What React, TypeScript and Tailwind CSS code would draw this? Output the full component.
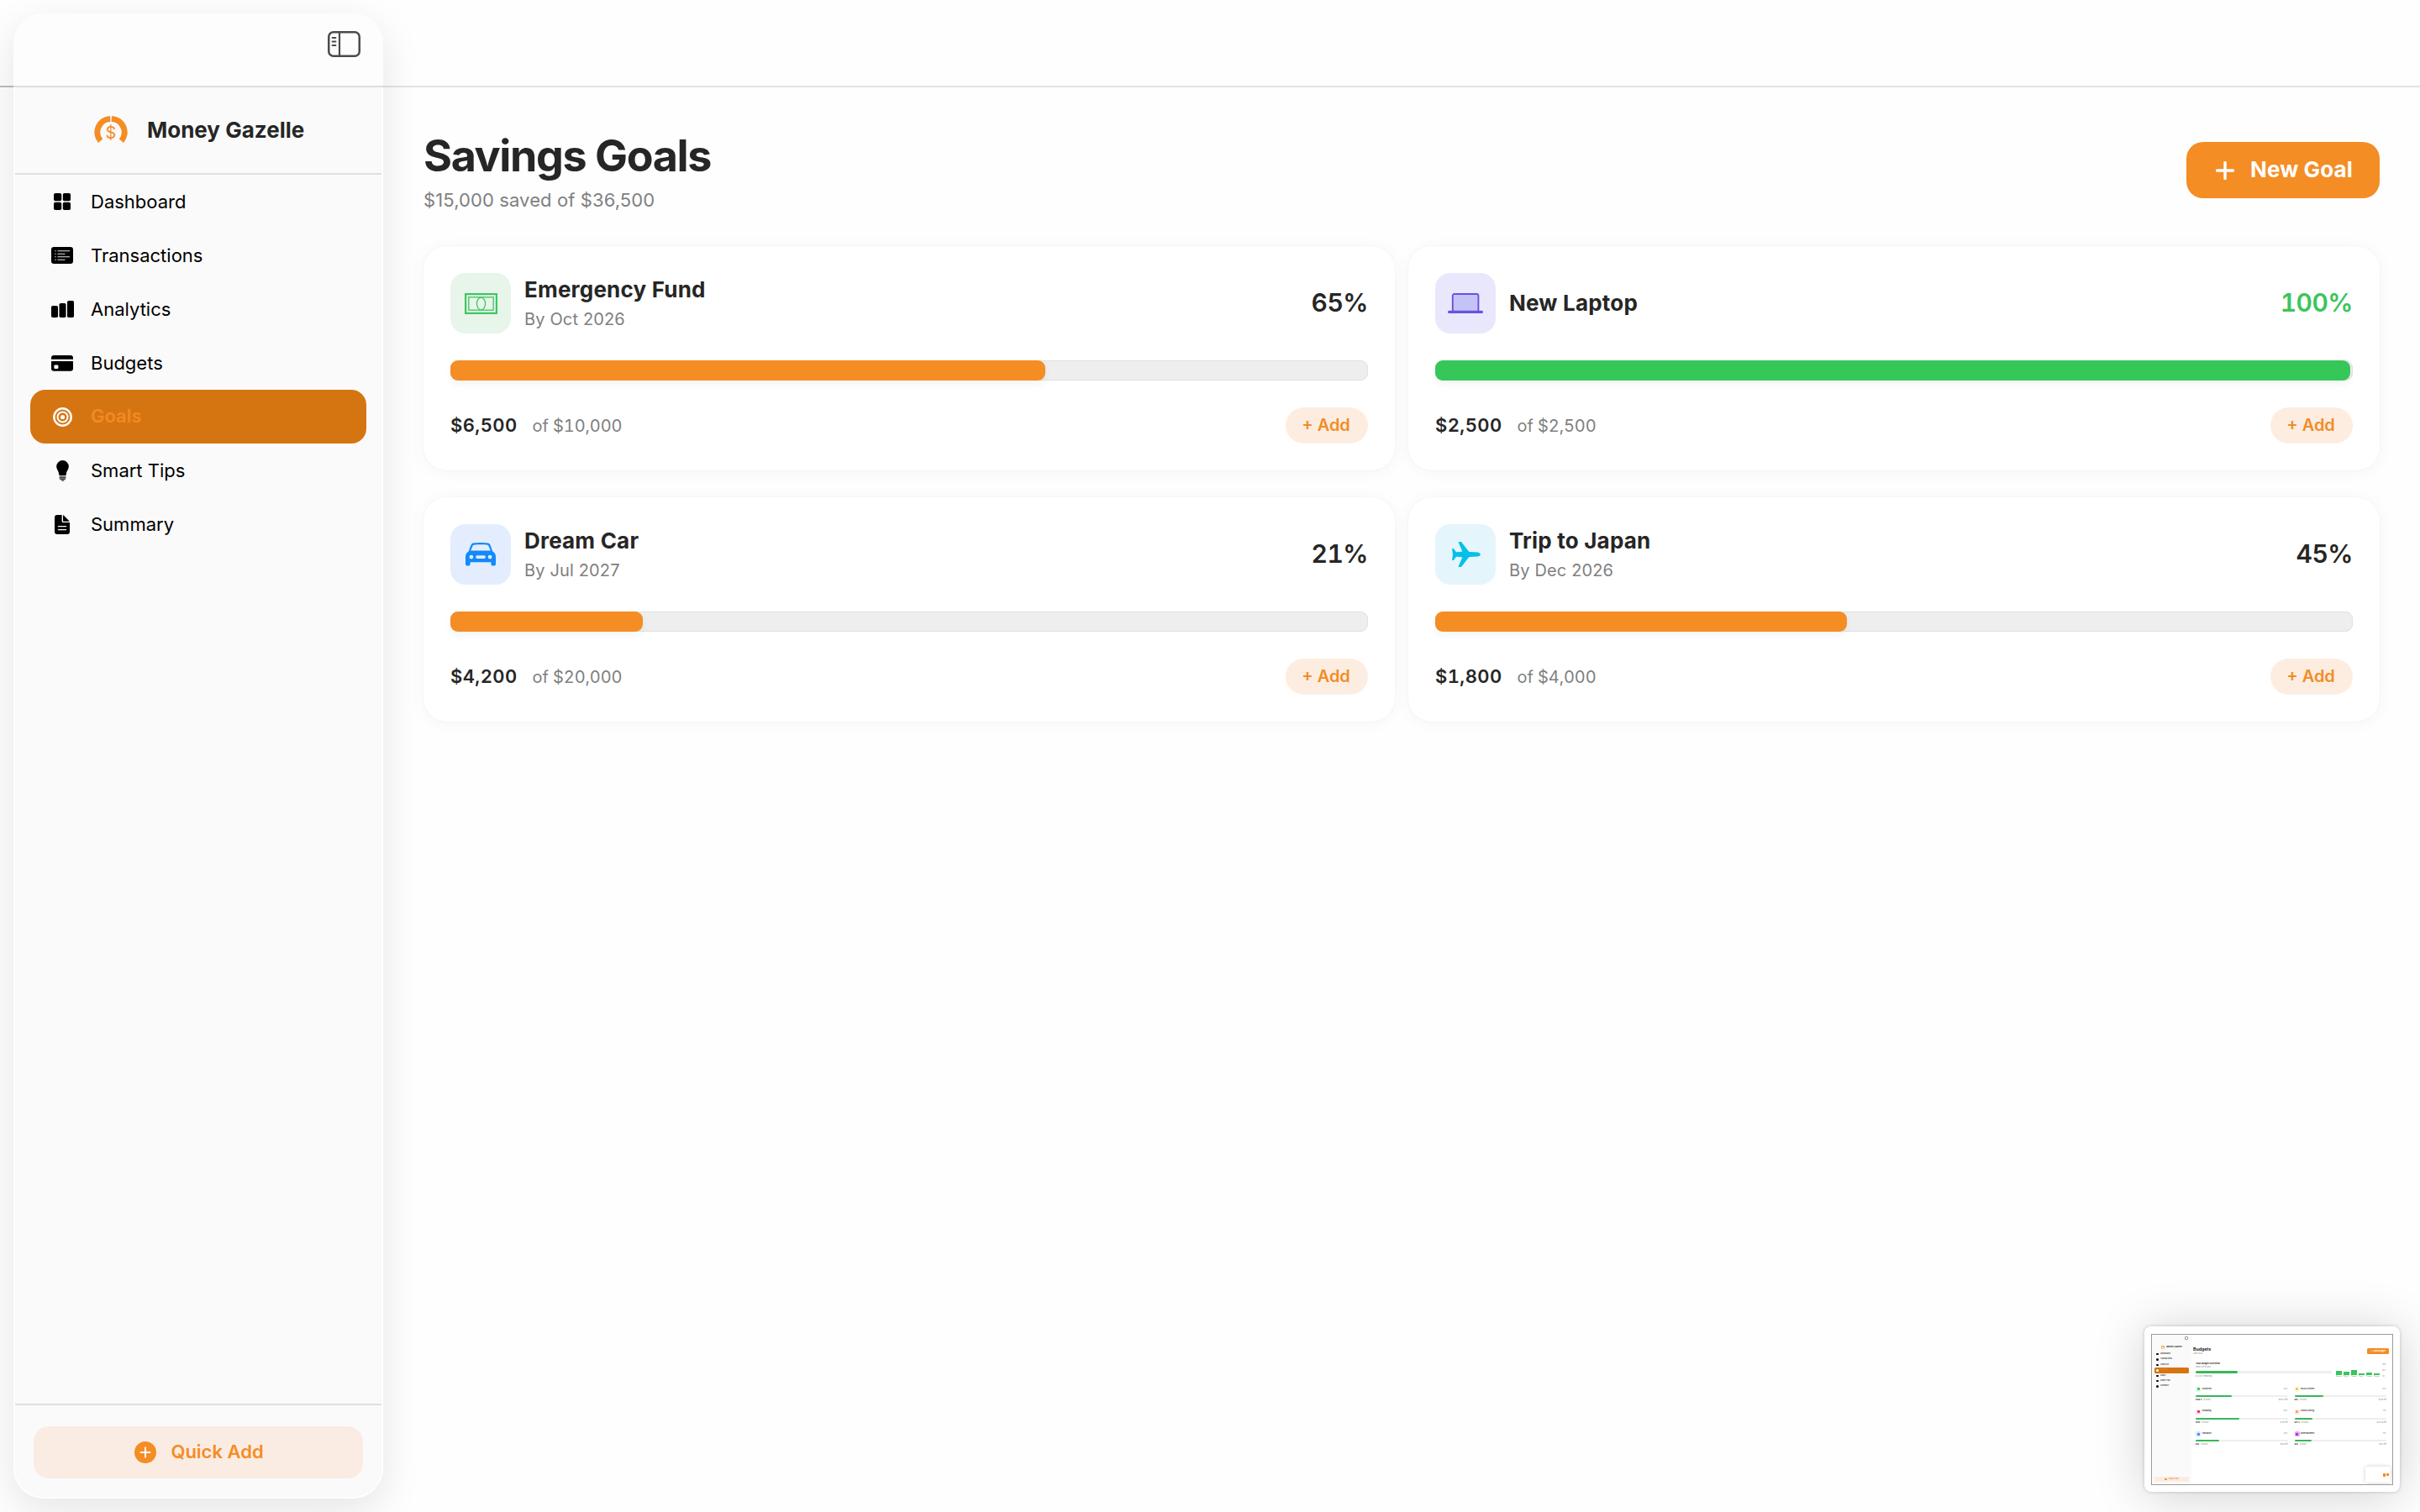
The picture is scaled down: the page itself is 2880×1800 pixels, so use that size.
import type { ReactNode } from "react";
import clsx from "clsx";

type IconProps = { className?: string };

function SidebarToggleIcon() {
  return (
    <svg width="39" height="31" viewBox="0 0 39 31" fill="none" stroke="#4b4b4b">
      <rect x="1.25" y="1.25" width="36.5" height="28.5" rx="5.5" strokeWidth="2.5" />
      <path d="M14 1.5v28" strokeWidth="2.2" />
      <path d="M5.5 8h4M5.5 12.5h4M5.5 17h4" strokeWidth="1.8" strokeLinecap="round" />
    </svg>
  );
}

function LogoIcon() {
  return (
    <svg width="40" height="36" viewBox="0 0 40 36">
      <path d="M19.2 4.5A16 16 0 0 0 7.6 30.8" fill="none" stroke="#f48d24" strokeWidth="7" />
      <path d="M20.8 4.5A16 16 0 0 1 32.4 30.8" fill="none" stroke="#f48d24" strokeWidth="7" />
      <text
        x="20"
        y="27.5"
        textAnchor="middle"
        fontSize="20"
        fontFamily="Inter, sans-serif"
        fill="#f48d24"
      >
        $
      </text>
    </svg>
  );
}

function DashboardIcon({ className }: IconProps) {
  return (
    <svg className={className} width="20" height="20" viewBox="0 0 20 20" fill="currentColor">
      <rect width="9.2" height="9.2" rx="1.8" />
      <rect x="10.8" width="9.2" height="9.2" rx="1.8" />
      <rect y="10.8" width="9.2" height="9.2" rx="1.8" />
      <rect x="10.8" y="10.8" width="9.2" height="9.2" rx="1.8" />
    </svg>
  );
}

function TransactionsIcon({ className }: IconProps) {
  return (
    <svg className={className} width="26" height="20" viewBox="0 0 26 20">
      <rect width="26" height="20" rx="3.2" fill="currentColor" />
      <path
        d="M7.5 4.7H22M7.5 8.2h9M7.5 11.7H22M7.5 15.2h9M4.3 4.7h1.4M4.3 8.2h1.4M4.3 11.7h1.4M4.3 15.2h1.4"
        stroke="#e4e4e4"
        strokeWidth="1.1"
      />
    </svg>
  );
}

function AnalyticsIcon({ className }: IconProps) {
  return (
    <svg className={className} width="27" height="20" viewBox="0 0 27 20" fill="currentColor">
      <rect y="6" width="8" height="14" rx="1.8" />
      <rect x="9.5" y="3" width="8" height="17" rx="1.8" />
      <rect x="19" width="8" height="20" rx="1.8" />
    </svg>
  );
}

function BudgetsIcon({ className }: IconProps) {
  return (
    <svg className={className} width="26" height="19" viewBox="0 0 26 19" fill="currentColor">
      <path d="M3.2 0h19.6A3.2 3.2 0 0 1 26 3.2v1.6H0V3.2A3.2 3.2 0 0 1 3.2 0Z" />
      <path
        fillRule="evenodd"
        d="M0 7h26v8.6a3.2 3.2 0 0 1-3.2 3.2H3.2A3.2 3.2 0 0 1 0 15.6V7Zm4.2 4.4a.8.8 0 0 0-.8.8v2.9c0 .4.4.8.8.8h3.4c.4 0 .8-.4.8-.8v-2.9a.8.8 0 0 0-.8-.8H4.2Z"
      />
    </svg>
  );
}

function GoalsIcon({ className }: IconProps) {
  return (
    <svg className={className} width="23" height="23" viewBox="0 0 23 23" fill="none" stroke="currentColor">
      <circle cx="11.5" cy="11.5" r="10.2" strokeWidth="2.4" />
      <circle cx="11.5" cy="11.5" r="6" strokeWidth="2" />
      <circle cx="11.5" cy="11.5" r="2.6" fill="currentColor" stroke="none" />
    </svg>
  );
}

function TipsIcon({ className }: IconProps) {
  return (
    <svg className={className} width="15" height="25" viewBox="0 0 15 25" fill="currentColor">
      <path d="M7.5 0A7.3 7.3 0 0 0 .2 7.3c0 3.8 2.6 5 3 9.4.1.9.6 1.6 1.5 1.6h5.6c.9 0 1.4-.7 1.5-1.6.4-4.4 3-5.6 3-9.4A7.3 7.3 0 0 0 7.5 0Z" />
      <path d="M3.6 19.4h7.8v1.3H3.6zM3.6 21.6h7.8c0 .7-.5 1.2-1.2 1.2H4.8c-.7 0-1.2-.5-1.2-1.2ZM5.2 23.6h4.6c-.4.8-1.3 1.2-2.3 1.2s-1.9-.4-2.3-1.2Z" />
    </svg>
  );
}

function SummaryIcon({ className }: IconProps) {
  return (
    <svg className={className} width="18" height="23" viewBox="0 0 18 23">
      <path
        d="M3 0h5.6v7.2c0 1.1.7 1.8 1.8 1.8H18v11a3 3 0 0 1-3 3H3a3 3 0 0 1-3-3V3a3 3 0 0 1 3-3Z"
        fill="currentColor"
      />
      <path d="M10 .3c.5.1.9.4 1.3.8l5.6 5.6c.4.4.6.7.7 1.1h-6.9c-.5 0-.7-.2-.7-.7V.3Z" fill="currentColor" />
      <path d="M4.4 13.7h9.2M4.4 17.6h9.2" stroke="#f9f9f9" strokeWidth="1.3" strokeLinecap="round" />
    </svg>
  );
}

function CashIcon() {
  return (
    <svg width="39" height="25" viewBox="0 0 39 25" fill="none" stroke="#3fc661">
      <rect x="1.1" y="1.1" width="36.8" height="22.8" strokeWidth="2.2" />
      <rect x="4.8" y="4.8" width="29.4" height="15.4" strokeWidth="1.3" />
      <ellipse cx="19.5" cy="12.5" rx="5.1" ry="7.3" strokeWidth="1.3" />
    </svg>
  );
}

function LaptopIcon() {
  return (
    <svg width="42" height="24" viewBox="0 0 42 24">
      <rect x="5.8" y="1" width="30.6" height="21" rx="2" fill="#c5c3f6" stroke="#6553e0" strokeWidth="1.9" />
      <rect y="20.8" width="42" height="3.2" rx="1.6" fill="#6553e0" />
    </svg>
  );
}

function CarIcon() {
  return (
    <svg width="36" height="28" viewBox="0 0 36 28" fill="#1389fb">
      <path
        fillRule="evenodd"
        d="M9.5 0.6C14 -.1 22 -.1 26.5 .6c1.6.2 2.6 1.2 3.2 2.7l2.6 7.1c2.1 1.1 3.7 3.2 3.7 6.1v8.9c0 1.2-.9 2.1-2.1 2.1h-1.4c-1.2 0-2.1-.9-2.1-2.1v-2.1H5.6v2.1c0 1.2-.9 2.1-2.1 2.1H2.1C.9 27.5 0 26.6 0 25.4v-8.9c0-2.9 1.6-5 3.7-6.1l2.6-7.1C6.9 1.8 7.9.8 9.5.6ZM10 2.7c-.7.1-1.2.5-1.5 1.2L6.2 9.5h23.6l-2.3-5.6c-.3-.7-.8-1.1-1.5-1.2-4-.5-12-.5-16 0ZM6.9 14.7a2.4 2.4 0 1 0 0 4.8 2.4 2.4 0 0 0 0-4.8Zm22.2 0a2.4 2.4 0 1 0 0 4.8 2.4 2.4 0 0 0 0-4.8ZM14 15.2a1.9 1.9 0 1 0 0 3.8h8a1.9 1.9 0 1 0 0-3.8h-8Z"
      />
    </svg>
  );
}

function PlaneIcon() {
  return (
    <svg className="ml-px" width="34" height="30" viewBox="0 0 34 30" fill="#04c0e8">
      <path d="M30.3 12.4c2 .2 3.5 1.3 3.5 2.6s-1.5 2.4-3.5 2.6l-9.3.4c-.6 0-.9.2-1.3.7L11.8 29c-.4.6-.9.9-1.6.9H8.4c-.5 0-.8-.4-.6-.9l4.3-10c.2-.5 0-.8-.6-.8l-5.9-.4c-.4 0-.7.1-1 .5l-2.3 3.1c-.3.4-.6.5-1 .5H.7c-.4 0-.6-.2-.6-.7l.9-6.2L.1 8.8c0-.5.2-.7.6-.7h.6c.4 0 .7.1 1 .5l2.3 3.1c.3.4.6.5 1 .5l5.900-.4c.6 0 .8-.3.6-.8L7.8 1c-.2-.5.1-.9.6-.9h1.800c.7 0 1.200.3 1.600.9l7.900 10.300c.4.5.7.7 1.300.7l9.300.4Z" />
    </svg>
  );
}

const NAV = [
  { label: "Dashboard", Icon: DashboardIcon },
  { label: "Transactions", Icon: TransactionsIcon },
  { label: "Analytics", Icon: AnalyticsIcon },
  { label: "Budgets", Icon: BudgetsIcon },
  { label: "Goals", Icon: GoalsIcon },
  { label: "Smart Tips", Icon: TipsIcon },
  { label: "Summary", Icon: SummaryIcon },
];

function Sidebar() {
  return (
    <aside className="relative m-4 mr-0 flex h-[1768px] w-[440px] shrink-0 flex-col rounded-[36px] bg-[#fafafa] shadow-[0_14px_48px_rgba(0,0,0,0.1),inset_0_0_0_2px_#fefefe]">
      <div className="flex h-[88px] shrink-0 items-start justify-end rounded-t-[36px] border-b-2 border-[#dedede] bg-[#fdfdfd] pt-[21px] pr-[27px]">
        <SidebarToggleIcon />
      </div>
      <div className="mx-0.5 flex h-[104px] shrink-0 items-center border-b-2 border-[#e0e0df] pl-[94px]">
        <LogoIcon />
        <span className="ml-[23px] pb-0.5 text-[26px] font-bold text-[#262626]">Money Gazelle</span>
      </div>
      <nav className="flex flex-1 flex-col px-5">
        {NAV.map(({ label, Icon }) => {
          const active = label === "Goals";
          return (
            <div
              key={label}
              className={clsx(
                "flex h-16 items-center rounded-[18px] pl-[18px] text-[22px]",
                active ? "bg-[#d57512] font-semibold text-[#f28a22]" : "text-black",
              )}
            >
              <span className="flex w-10 justify-center">
                <Icon className={active ? "text-white" : "text-black"} />
              </span>
              <span className={clsx("ml-[14px]", active && "pb-0.5")}>{label}</span>
            </div>
          );
        })}
      </nav>
      <div className="mx-0.5 h-[113px] shrink-0 border-t-2 border-[#dfdfdf] px-[22px] pt-[25px]">
        <button className="flex h-[62px] w-full items-center justify-center rounded-[18px] bg-[#fbece3] pl-0.5 text-[22px] font-semibold text-[#f48d24]">
          <svg width="26" height="26" viewBox="0 0 26 26">
            <circle cx="13" cy="13" r="13" fill="#f48d24" />
            <path d="M13 7.5v11M7.5 13h11" stroke="#fff" strokeWidth="2" strokeLinecap="round" />
          </svg>
          <span className="ml-[17px] pb-px">Quick Add</span>
        </button>
      </div>
    </aside>
  );
}

type Goal = {
  name: string;
  due?: string;
  percent: number;
  saved: string;
  target: string;
  tile: string;
  icon: ReactNode;
};

const GOALS: Goal[] = [
  {
    name: "Emergency Fund",
    due: "By Oct 2026",
    percent: 65,
    saved: "$6,500",
    target: "$10,000",
    tile: "bg-[#e7f5ea]",
    icon: <CashIcon />,
  },
  {
    name: "New Laptop",
    percent: 100,
    saved: "$2,500",
    target: "$2,500",
    tile: "bg-[#e9e7fc]",
    icon: <LaptopIcon />,
  },
  {
    name: "Dream Car",
    due: "By Jul 2027",
    percent: 21,
    saved: "$4,200",
    target: "$20,000",
    tile: "bg-[#e3edfd]",
    icon: <CarIcon />,
  },
  {
    name: "Trip to Japan",
    due: "By Dec 2026",
    percent: 45,
    saved: "$1,800",
    target: "$4,000",
    tile: "bg-[#e5f5fc]",
    icon: <PlaneIcon />,
  },
];

function GoalCard({ goal }: { goal: Goal }) {
  const done = goal.percent >= 100;
  return (
    <div className="h-[267px] rounded-[28px] bg-white p-8 shadow-[0_0_0_1px_rgba(0,0,0,0.02),0_2px_20px_rgba(0,0,0,0.04)]">
      <div className="flex items-center">
        <div className={clsx("flex size-[72px] items-center justify-center rounded-[18px]", goal.tile)}>
          {goal.icon}
        </div>
        <div className={clsx("ml-4", goal.due && "-mt-0.5")}>
          <div className="text-[26px] leading-8 font-bold tracking-[0.2px] text-[#262626]">{goal.name}</div>
          {goal.due && (
            <div className="mt-[7px] text-[20px] leading-6 tracking-[0.15px] text-[#808080]">{goal.due}</div>
          )}
        </div>
        <div
          className={clsx(
            "ml-auto pb-px text-[30px] font-semibold tracking-[-0.5px] tabular-nums",
            done ? "text-[#3cc45d]" : "text-[#262626]",
          )}
        >
          {goal.percent}%
        </div>
      </div>
      <div className="mt-8 h-6 rounded-[9px] bg-[#eeeeee] pr-[3px] shadow-[inset_0_0_0_1px_#e0e0e0]">
        <div
          className={clsx(
            "h-6 rounded-[9px] shadow-[0_4px_10px_rgba(0,0,0,0.05)]",
            done ? "bg-[#36c759]" : "bg-[#f48d24]",
          )}
          style={{ width: `${goal.percent}%` }}
        />
      </div>
      <div className="mt-8 flex h-[43px] items-center">
        <span className="text-[22px] font-semibold tracking-[0.4px] text-[#262626] tabular-nums">{goal.saved}</span>
        <span className="ml-[18px] text-[20px] tracking-[-0.1px] text-[#808080] tabular-nums">of {goal.target}</span>
        <button className="ml-auto h-[43px] w-[98px] rounded-full bg-[#fdede1] pr-0.5 pb-px text-[20px] font-semibold text-[#f28c26]">
          + Add
        </button>
      </div>
    </div>
  );
}

const THUMB_BUDGETS = [
  { name: "Groceries", fill: "w-[43px]", dot: "bg-[#36c759]", tile: "bg-[#e7f5ea]", spent: "$198.5", of: "of $500", left: "$301.5 left", pct: "40%" },
  { name: "Bills & Utilities", fill: "w-[34px]", dot: "bg-[#f5c542]", tile: "bg-[#fdf6e0]", spent: "$95", of: "of $300", left: "$205 left", pct: "32%" },
  { name: "Shopping", fill: "w-[52px]", dot: "bg-[#f0264f]", tile: "bg-[#fde6ea]", spent: "$120", of: "of $250", left: "$130 left", pct: "48%" },
  { name: "Food & Dining", fill: "w-[21px]", dot: "bg-[#f5a06a]", tile: "bg-[#fdeadf]", spent: "$76.4", of: "of $400", left: "$323.6 left", pct: "19%" },
  { name: "Transport", fill: "w-[28px]", dot: "bg-[#3f8cf5]", tile: "bg-[#d5e6fd]", spent: "$52", of: "of $200", left: "$148 left", pct: "26%" },
  { name: "Entertainment", fill: "w-[20px]", dot: "bg-[#b02cd0]", tile: "bg-[#e3a9f0]", spent: "$28", of: "of $150", left: "$122 left", pct: "19%" },
];

const THUMB_BARS = [
  { height: "h-[5px]", label: "Groceri…" },
  { height: "h-[4px]", label: "Bills &…" },
  { height: "h-[6px]", label: "Shopp…" },
  { height: "h-[2px]", label: "Food …" },
  { height: "h-[3px]", label: "Transp…" },
  { height: "h-[2px]", label: "Enterta…" },
];

function ScreenshotThumb() {
  return (
    <div className="absolute right-6 bottom-6 h-[197px] w-[304px] rounded-[8px] bg-white px-2 py-[9px] shadow-[0_0_4px_rgba(0,0,0,0.2),0_4px_60px_rgba(0,0,0,0.18)]">
      <div className="relative flex h-[180px] w-[288px] overflow-hidden border border-[#9b9b9b] bg-white">
        <div className="flex w-[47px] shrink-0 flex-col bg-[#fafafa] px-[3px] text-[2.3px] leading-none">
          <div className="mt-[2px] mr-px h-[4px] w-[4px] self-end rounded-[1px] border-[0.5px] border-[#999]" />
          <div className="mt-[6px] flex h-[5px] items-center justify-center text-[2.6px] font-bold text-[#262626]">
            <span className="mr-[2px] size-[4px] rounded-full border border-b-0 border-[#f48d24]" />
            Money Gazelle
          </div>
          <div className="mt-[3px]">
            {NAV.map(({ label }) => (
              <div
                key={label}
                className={clsx(
                  "flex h-[6.4px] items-center rounded-[1.5px] pl-[2px]",
                  label === "Budgets" ? "bg-[#d57512] text-[#f28a22]" : "text-black",
                )}
              >
                <span
                  className={clsx(
                    "mr-[2.5px] size-[2.5px] rounded-full",
                    label === "Budgets" ? "bg-white" : "bg-black",
                  )}
                />
                {label}
              </div>
            ))}
          </div>
          <div className="mt-auto mb-[3px] flex h-[6px] items-center justify-center rounded-[1.5px] bg-[#fbece3] font-semibold text-[#f48d24]">
            <span className="mr-[2px] size-[2.5px] rounded-full bg-[#f48d24]" />
            Quick Add
          </div>
        </div>
        <div className="flex-1 pt-[15px] pr-[4px] pl-[2px] text-[2.2px] leading-none text-[#808080]">
          <div className="flex items-center">
            <div>
              <div className="text-[5.2px] font-bold text-[#262626]">Budgets</div>
              <div className="mt-[1.5px]">June 2026</div>
            </div>
            <div className="ml-auto flex h-[7px] w-[26px] items-center justify-center rounded-[1.5px] bg-[#f48d24] text-[2.6px] font-bold text-white">
              +&nbsp; Add Budget
            </div>
          </div>
          <div className="mt-[9px] flex px-[3px]">
            <div className="w-[162px]">
              <div className="text-[2.6px] font-bold text-[#262626]">Total Budget Overview</div>
              <div className="mt-[2px]">$569.9 of $1,800</div>
              <div className="mt-[3px] h-[3px] rounded-full bg-[#eeeeee]">
                <div className="h-[3px] w-[50px] rounded-full bg-[#36b857]" />
              </div>
              <div className="mt-[3px]">$1,230.1 remaining</div>
            </div>
            <div className="ml-auto flex items-end gap-[2px]">
              {THUMB_BARS.map((bar) => (
                <div key={bar.label} className="w-[7px] text-[1.8px]">
                  <div className={clsx("bg-[#36c759]", bar.height)} />
                  <div className="mt-px whitespace-nowrap">{bar.label}</div>
                </div>
              ))}
              <div className="ml-px flex h-[16px] flex-col justify-between text-[1.8px]">
                <span>100%</span>
                <span>50%</span>
                <span>0%</span>
              </div>
            </div>
          </div>
          <div className="mt-[11px] grid grid-cols-2 gap-x-[8px] px-[3px]">
            {THUMB_BUDGETS.map((b) => (
              <div key={b.name} className="h-[26.6px]">
                <div className="flex items-center">
                  <span className={clsx("flex size-[6px] items-center justify-center rounded-[1.5px]", b.tile)}>
                    <span className={clsx("size-[3px] rounded-[1px]", b.dot)} />
                  </span>
                  <span className="ml-[1.5px] text-[2.4px] font-semibold text-[#262626]">{b.name}</span>
                  <span className="ml-auto text-[#36b857]">{b.pct}</span>
                </div>
                <div className="mt-[4px] h-[2px] rounded-full bg-[#eeeeee]">
                  <div className={clsx("h-[2px] rounded-full bg-[#36b857]", b.fill)} />
                </div>
                <div className="mt-[3px] flex">
                  <span className="font-bold text-[#262626]">{b.spent}</span>
                  <span className="ml-[2px]">{b.of}</span>
                  <span className="ml-auto">{b.left}</span>
                </div>
              </div>
            ))}
          </div>
        </div>
        <div className="absolute right-[2px] bottom-[2px] flex h-[19px] w-[30px] items-center justify-end gap-px rounded-[1.5px] bg-white pr-[2px] shadow-[0_0_5px_rgba(0,0,0,0.2)]">
          <span className="h-[4px] w-[3px] bg-[#f48d24]" />
          <span className="h-[3px] w-[3px] bg-[#f48d24]" />
        </div>
      </div>
    </div>
  );
}

export default function App() {
  return (
    <div className="relative flex h-[1800px] w-[2880px] overflow-hidden bg-[#fefefe] font-['Inter',sans-serif]">
      {/* window toolbar, runs underneath the floating sidebar */}
      <div className="absolute inset-x-0 top-0 flex h-[104px] items-end">
        <div className="h-0.5 w-4 bg-[#bdbdbd]" />
        <div className="h-0.5 flex-1 bg-[#e2e2e2]" />
      </div>
      <Sidebar />
      <main className="flex-1 pt-[156px] pr-12 pl-12">
        <div className="flex items-start">
          <div>
            <h1 className="text-[52px] leading-[59px] font-bold tracking-[-1.4px] text-[#262626]">Savings Goals</h1>
            <p className="mt-[9px] text-[22px] leading-7 tracking-[0.1px] text-[#808080]">
              $15,000 saved of $36,500
            </p>
          </div>
          <button className="mt-[13px] ml-auto flex h-[67px] w-[230px] items-center rounded-[20px] bg-[#f48d24] pl-[35px] text-[26px] font-bold text-white">
            <svg width="22" height="22" viewBox="0 0 22 22">
              <path d="M11 1.5v19M1.5 11h19" stroke="#fff" strokeWidth="3.4" strokeLinecap="round" />
            </svg>
            <span className="ml-[19px] pb-0.5 tracking-[0.1px]">New Goal</span>
          </button>
        </div>
        <div className="mt-[41px] grid grid-cols-2 gap-x-4 gap-y-8">
          {GOALS.map((goal) => (
            <GoalCard key={goal.name} goal={goal} />
          ))}
        </div>
      </main>
      <ScreenshotThumb />
    </div>
  );
}
